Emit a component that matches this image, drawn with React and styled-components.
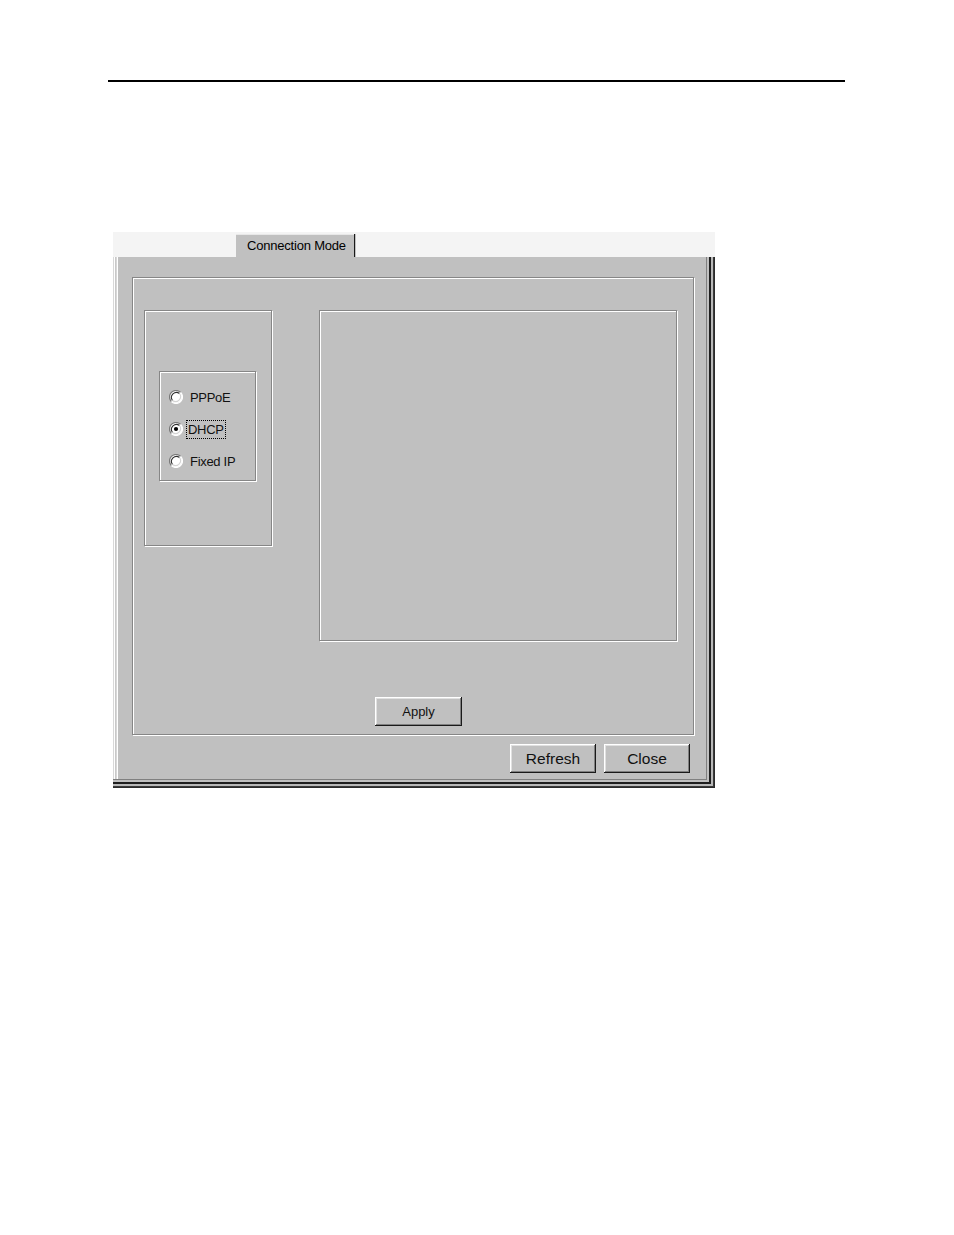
import React from 'react';
import styled, { createGlobalStyle } from 'styled-components';

const GlobalStyle = createGlobalStyle`
  body {
    margin: 0;
    background: #ffffff;
    font-family: "Liberation Sans", Arial, sans-serif;
    color: #000;
  }
`;

const Page = styled.div`
  padding-top: 80px;
  width: 954px;
  height: 1235px;
  box-sizing: border-box;
`;

const Rule = styled.div`
  margin-left: 108px;
  width: 737px;
  border-top: 2px solid #000;
`;

const Dialog = styled.div`
  margin: 150px 0 0 113px;
  width: 602px;
`;

const TabStrip = styled.div`
  height: 25px;
  background: #f4f4f4;
  display: flex;
  align-items: flex-end;
  padding-left: 123px;
`;

const Tab = styled.div`
  width: 120px;
  height: 23px;
  box-sizing: border-box;
  background: #c0c0c0;
  font-size: 13px;
  letter-spacing: -0.2px;
  padding: 4px 0 0 11px;
  box-shadow: inset -1px 0 0 #c0c0c0, inset -2px 0 0 #1a1a1a, inset 0 1px 0 #e8e8e8;
`;

const Body = styled.div`
  height: 531px;
  box-sizing: border-box;
  background: #c0c0c0;
  padding: 20px 0 0 19px;
  box-shadow:
    inset -1px -1px 0 #2a2a2a,
    inset -2px -2px 0 #3a3a3a,
    inset -4px -4px 0 #b8b8b8,
    inset -6px -6px 0 #1e1e1e,
    inset -8px -8px 0 #c0c0c0,
    inset -9px -9px 0 #808080,
    inset 1px 0 0 #d8d8d8,
    inset 2px 0 0 #ffffff,
    inset 3px 0 0 #c8c8c8,
    inset 4px 0 0 #d8d8d8,
    inset 5px 0 0 #ffffff;
`;

const Etched = styled.div`
  box-sizing: border-box;
  width: ${p => p.$w}px;
  height: ${p => p.$h}px;
  border: 1px solid #868686;
  box-shadow: 1px 1px 0 #ffffff, inset 1px 1px 0 #ffffff;
`;

const Group = styled(Etched)`
  padding: 32px 0 0 11px;
`;

const Row = styled.div`
  display: flex;
  align-items: flex-start;
  gap: 47px;
`;

const ModeBox = styled(Etched)`
  padding: 60px 0 0 14px;
`;

const RadioGroup = styled(Etched)`
  padding: 16px 0 0 9px;
  display: flex;
  flex-direction: column;
  gap: 14px;
`;

const RadioRow = styled.label`
  display: flex;
  align-items: center;
  height: 18px;
  gap: 6px;
  font-size: 13px;
  letter-spacing: -0.3px;
  color: #111;
`;

const RadioLabel = styled.span`
  padding: 1px 1px;
  outline: ${p => (p.$focus ? '1px dotted #000' : 'none')};
  margin-left: ${p => (p.$focus ? '-2px' : '0')};
`;

const ApplyRow = styled.div`
  padding: 56px 0 0 231px;
`;

const Button = styled.div`
  box-sizing: border-box;
  width: ${p => p.$w}px;
  height: 29px;
  background: #c0c0c0;
  display: flex;
  align-items: center;
  justify-content: center;
  font-size: ${p => p.$size}px;
  color: #111;
  box-shadow:
    inset -1px -1px 0 #1a1a1a,
    inset 1px 1px 0 #ffffff,
    inset -2px -2px 0 #808080,
    inset 2px 2px 0 #e0e0e0;
`;

const ButtonRow = styled.div`
  display: flex;
  justify-content: flex-end;
  gap: 8px;
  padding: 9px 25px 0 0;
`;

const Radio = ({ checked }) => (
  <svg width="14" height="14" viewBox="0 0 14 14">
    <circle cx="7" cy="7" r="6.2" fill="#ffffff" />
    <path d="M11.6 2.4 A6.5 6.5 0 0 0 2.4 11.6" fill="none" stroke="#7a7a7a" strokeWidth="1.2" />
    <path d="M10.5 3.5 A5 5 0 0 0 3.5 10.5" fill="none" stroke="#303030" strokeWidth="1.1" />
    <path d="M2.4 11.6 A6.5 6.5 0 0 0 11.6 2.4" fill="none" stroke="#ffffff" strokeWidth="1.2" />
    <path d="M3.5 10.5 A5 5 0 0 0 10.5 3.5" fill="none" stroke="#d4d4d4" strokeWidth="1.1" />
    {checked && <circle cx="7" cy="7" r="2.1" fill="#000" />}
  </svg>
);

const modes = [
  { label: 'PPPoE' },
  { label: 'DHCP', checked: true },
  { label: 'Fixed IP' },
];

const App = () => (
  <Page>
    <GlobalStyle />
    <Rule />
    <Dialog>
      <TabStrip>
        <Tab>Connection Mode</Tab>
      </TabStrip>
      <Body>
        <Group $w={562} $h={458}>
          <Row>
            <ModeBox $w={128} $h={236}>
              <RadioGroup $w={97} $h={110}>
                {modes.map(m => (
                  <RadioRow key={m.label}>
                    <Radio checked={m.checked} />
                    <RadioLabel $focus={m.checked}>{m.label}</RadioLabel>
                  </RadioRow>
                ))}
              </RadioGroup>
            </ModeBox>
            <Etched $w={358} $h={331} />
          </Row>
          <ApplyRow>
            <Button $w={87} $size={13}>Apply</Button>
          </ApplyRow>
        </Group>
        <ButtonRow>
          <Button $w={86} $size={15.5}>Refresh</Button>
          <Button $w={86} $size={15.5}>Close</Button>
        </ButtonRow>
      </Body>
    </Dialog>
  </Page>
);

export default App;
